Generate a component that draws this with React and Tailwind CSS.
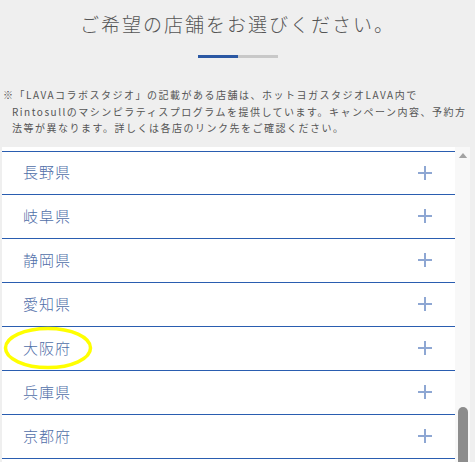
const prefectures = ['長野県', '岐阜県', '静岡県', '愛知県', '大阪府', '兵庫県', '京都府'];

function PlusIcon() {
  return (
    <svg width="14" height="14" viewBox="0 0 14 14" className="shrink-0">
      <path d="M7 0v14M0 7h14" stroke="#8ea7d3" strokeWidth="2" fill="none" />
    </svg>
  );
}

function ScrollTrack() {
  return (
    <div className="flex w-[15px] shrink-0 flex-col items-center bg-[#f8f8f8]">
      <svg width="10" height="6" viewBox="0 0 10 6" className="mt-[6px]">
        <path d="M5 0L10 6H0z" fill="#a3a3a3" />
      </svg>
      <div className="mt-[249px] h-[70px] w-[10px] rounded-t-full bg-[#8d8d8d]" />
    </div>
  );
}

export default function App() {
  return (
    <div
      className="relative min-h-screen overflow-hidden bg-[#efefef] text-[#555]"
      style={{ fontFamily: '"Noto Sans CJK JP", "Noto Sans", sans-serif' }}
    >
      <h2 className="pt-[10px] text-center text-[19px] font-light leading-[28px] tracking-[2px] text-[#555]">
        ご希望の店舗をお選びください。
      </h2>
      <div className="mx-auto mt-[17px] flex h-[3px] w-[80px]">
        <div className="w-1/2 bg-[#2b58a3]" />
        <div className="w-1/2 bg-[#c8c8c8]" />
      </div>

      <div className="mt-[29px] pl-[3px] text-[10px] leading-[16.5px] tracking-[1.5px] whitespace-nowrap text-[#555]">
        <p>※「LAVAコラボスタジオ」の記載がある店舗は、ホットヨガスタジオLAVA内で</p>
        <p className="pl-[9px]">Rintosullのマシンピラティスプログラムを提供しています。キャンペーン内容、予約方</p>
        <p className="pl-[9px]">法等が異なります。詳しくは各店のリンク先をご確認ください。</p>
      </div>

      <div className="mt-[10px] ml-[2px] flex h-[330px] w-[468px] overflow-hidden bg-white">
        <ul className="flex-1 pt-[4px]">
          {prefectures.map((name, i) => (
            <li
              key={name}
              className={`flex h-[44px] items-center justify-between border-b border-[#2a5db0] pr-[23px] pl-[21px] ${
                i === 0 ? 'border-t' : ''
              }`}
            >
              <span className="text-[15px] font-light tracking-[1px] text-[#4f6ea8]">{name}</span>
              <PlusIcon />
            </li>
          ))}
        </ul>
        <ScrollTrack />
      </div>

      {/* yellow marker around 大阪府 */}
      <svg className="pointer-events-none absolute top-[326px] left-[3px]" width="90" height="44" viewBox="0 0 90 44">
        <ellipse cx="45" cy="22" rx="42.5" ry="19.5" fill="none" stroke="#ffff00" strokeWidth="3.5" />
      </svg>
    </div>
  );
}
